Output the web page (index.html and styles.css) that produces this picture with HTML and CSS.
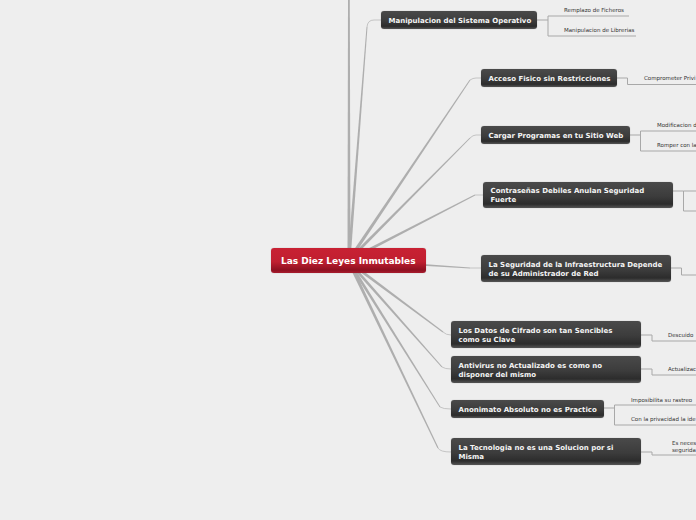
FILE: index.html
```html
<!DOCTYPE html>
<html lang="es">
<head>
<meta charset="utf-8">
<title>Las Diez Leyes Inmutables</title>
<link rel="stylesheet" href="styles.css">
</head>
<body>
<main class="canvas">
<svg class="links" width="696" height="520" viewBox="0 0 696 520">
  <g class="trunk">
    <polygon points="347.5,262 350.5,262 349.8,0 348,0"/>
    <polygon points="350.5,260.2 347.5,259.8 366.5,27 367.5,27"/>
    <polygon points="350.3,261.1 347.7,258.9 469.6,79.7 470.4,80.3"/>
    <polygon points="350.1,261.1 347.9,258.9 469.65,137.65 470.35,138.35"/>
    <polygon points="349.7,261.4 348.3,258.6 474.8,194.55 475.2,195.45"/>
    <polygon points="348.9,261.5 349.1,258.5 470,267.5 470,268.5"/>
    <polygon points="348.1,263.2 349.9,260.8 443.3,331.6 442.7,332.4"/>
    <polygon points="347.9,263 350.1,261 442.4,366.7 441.6,367.3"/>
    <polygon points="347.7,262.8 350.3,261.2 440.4,406.7 439.6,407.3"/>
    <polygon points="347.6,262.7 350.4,261.3 438.5,447.8 437.5,448.2"/>
  </g>
  <g class="tips">
    <path d="M367 27Q367.5 20 374 20H381"/>
    <path d="M470 80Q473 78 476 78H481"/>
    <path d="M470 138Q473 135 476 135H481"/>
    <path d="M475 195Q477 195 483 195"/>
    <path d="M470 268H481"/>
    <path d="M443 332Q446 335 451 335"/>
    <path d="M442 367Q445 369 451 369"/>
    <path d="M440 407Q443 409 451 409"/>
    <path d="M438 448Q440 452 451 452"/>
  </g>
  <g class="branch">
    <path d="M537 20H548M629 16H548V36H636"/>
    <path d="M617 78H627.500V84.500H696"/>
    <path d="M630 135H640.500M696 131H640.500V151H696"/>
    <path d="M673 191H683.500M696 191H683.500V211H696"/>
    <path d="M671 268H681.500V275H696"/>
    <path d="M641 335H652V341H696"/>
    <path d="M641 369H652V375H696"/>
    <path d="M604 408H614.500M696 405H614.500V425H696"/>
    <path d="M641 452H652V455H696"/>
  </g>
</svg>

<div class="node root single">Las Diez Leyes Inmutables</div>
<div class="node n1 single">Manipulacion del Sistema Operativo</div>
<div class="node n2 single">Acceso Fisico sin Restricciones</div>
<div class="node n3 single">Cargar Programas en tu Sitio Web</div>
<div class="node n4">Contraseñas Debiles Anulan Seguridad Fuerte</div>
<div class="node n5">La Seguridad de la Infraestructura Depende de su Administrador de Red</div>
<div class="node n6">Los Datos de Cifrado son tan Sencibles como su Clave</div>
<div class="node n7">Antivirus no Actualizado es como no disponer del mismo</div>
<div class="node n8 single">Anonimato Absoluto no es Practico</div>
<div class="node n9">La Tecnologia no es una Solucion por si Misma</div>

<span class="leaf l1">Remplazo de Ficheros</span>
<span class="leaf l2">Manipulacion de Librerias</span>
<span class="leaf l3">Comprometer Privi</span>
<span class="leaf l4">Modificacion d</span>
<span class="leaf l5">Romper con la</span>
<span class="leaf l6">Descuido</span>
<span class="leaf l7">Actualizac</span>
<span class="leaf l8">Imposibilita su rastreo</span>
<span class="leaf l9">Con la privacidad la ide</span>
<span class="leaf l10">Es neces<br>segurida</span>
</main>
</body>
</html>
```
FILE: styles.css
```css
html, body {
  margin: 0;
  padding: 0;
  overflow: hidden;
  background: #eeeeee;
}

.canvas {
  position: relative;
  width: 696px;
  height: 520px;
  overflow: hidden;
  background: #eeeeee;
  font-family: "DejaVu Sans", Verdana, sans-serif;
}

.links {
  position: absolute;
  left: 0;
  top: 0;
}

.trunk polygon {
  fill: #aeaeae;
}

.tips path {
  fill: none;
  stroke: #c4c4c4;
  stroke-width: 1;
}

.branch path {
  fill: none;
  stroke: #a8a8a8;
  stroke-width: 1;
}

.node {
  position: absolute;
  box-sizing: border-box;
  display: flex;
  align-items: center;
  padding: 2px 7.500px 0;
  border-radius: 3px;
  color: #f4f4f4;
  font-size: 7px;
  font-weight: 700;
  line-height: 9px;
  background: linear-gradient(#4a4a4a 0%, #3c3c3c 55%, #2c2c2c 85%, #555555 100%);
  box-shadow: 0 0 1px rgba(0, 0, 0, .35);
}

.single {
  white-space: nowrap;
}

.root {
  left: 271px;
  top: 248px;
  width: 155px;
  height: 25px;
  padding: 1px 10px 0;
  color: #ffffff;
  font-size: 9px;
  background: linear-gradient(#c82133 0%, #c01f30 55%, #8e1020 88%, #a81c2e 100%);
}

.n1 { left: 381px; top: 11px; width: 156px; height: 18px; }
.n2 { left: 481px; top: 69px; width: 136px; height: 18px; }
.n3 { left: 481px; top: 126px; width: 149px; height: 18px; }
.n4 { left: 483px; top: 182px; width: 190px; height: 26px; }
.n5 { left: 481px; top: 255px; width: 190px; height: 27px; }
.n6 { left: 451px; top: 321px; width: 190px; height: 27px; }
.n7 { left: 451px; top: 356px; width: 190px; height: 27px; }
.n8 { left: 451px; top: 400px; width: 153px; height: 18px; }
.n9 { left: 451px; top: 438px; width: 190px; height: 27px; }

.leaf {
  position: absolute;
  color: #333333;
  font-size: 5.500px;
  line-height: 6.500px;
  white-space: nowrap;
}

.l1 { left: 564px; top: 7px; }
.l2 { left: 564px; top: 27px; }
.l3 { left: 644px; top: 75px; }
.l4 { left: 657px; top: 122px; }
.l5 { left: 657px; top: 142px; }
.l6 { left: 668px; top: 332px; }
.l7 { left: 668px; top: 366px; }
.l8 { left: 631px; top: 397px; }
.l9 { left: 631px; top: 416px; }
.l10 { left: 672px; top: 440px; }
```
